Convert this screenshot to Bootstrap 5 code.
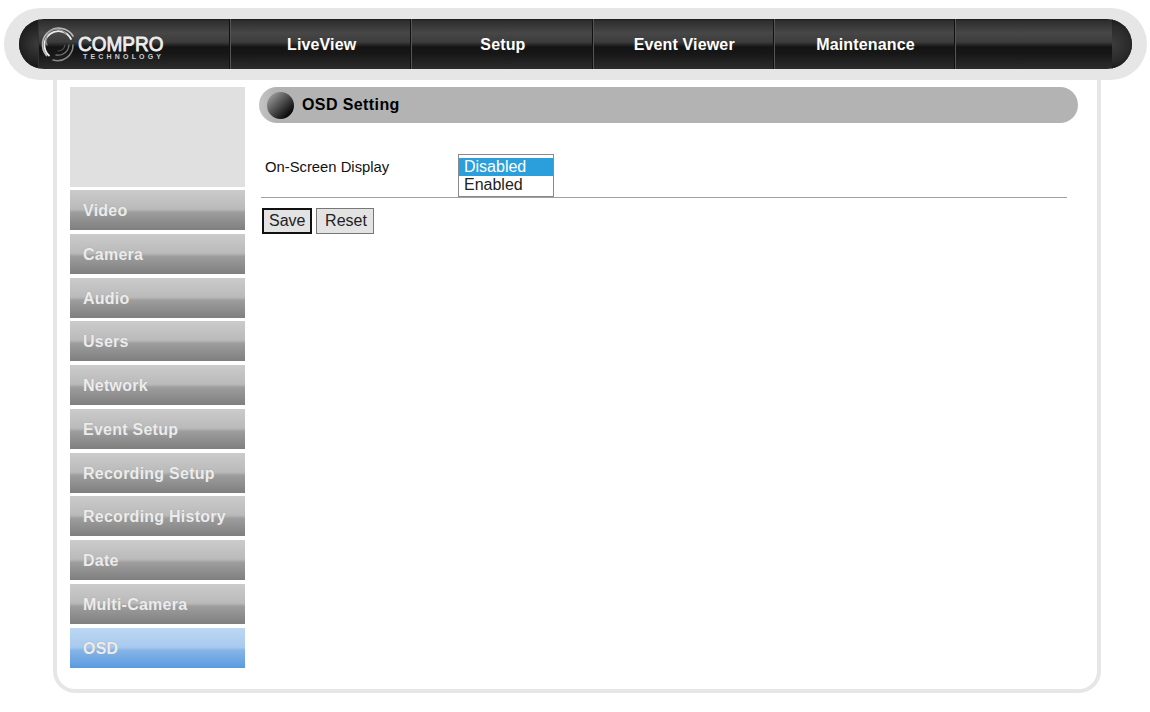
<!DOCTYPE html>
<html lang="en">
<head>
<meta charset="utf-8">
<title>OSD Setting</title>
<link href="https://cdn.jsdelivr.net/npm/bootstrap@5.3.0/dist/css/bootstrap.min.css" rel="stylesheet">
<style>
html,body{height:100%}
body{margin:0;background:#fff;font-family:"Liberation Sans",Arial,sans-serif;color:#111;overflow:hidden}
.hdr-band{margin:8px 3px 0 4px;height:72px;padding:11px 15px;background:#e6e6e6;border-radius:36px;position:relative;z-index:2}
.hdr-bar{height:50px;border-radius:25px;overflow:hidden;background:linear-gradient(#1c1c1c 0,#2e2e2e 2px,#474747 14px,#3c3c3c 23px,#141414 28px,#161616 34px,#2c2c2c 100%)}
.cap{width:20px;flex:none}
.cap-l{background:radial-gradient(circle at 100% 50%,#3c3c3c 0,#222 55%,#0c0c0c 100%);border-right:1px solid #333}
.cap-r{background:radial-gradient(circle at 0 50%,#3c3c3c 0,#2a2a2a 55%,#0c0c0c 100%)}
.logo-cell{width:191px;flex:none;padding-left:1px}
.nav-cell{flex:none;width:181.3px;padding-left:1px;border-left:1px solid #555;box-shadow:-1px 0 0 #111;color:#fff;font-weight:700;font-size:16px;letter-spacing:.15px;text-decoration:none;line-height:52px;text-align:center}
.nav-last{flex:1 1 0;width:auto}
.logo-main{font:400 19px "Liberation Sans",Arial,sans-serif;fill:#eee;stroke:#eee;stroke-width:.75px}
.logo-sub{font:700 7px "Liberation Sans",Arial,sans-serif;fill:#d0d0d0}
.frame{margin:0 49px 0 53px;height:613px;border:solid #e6e6e6;border-width:0 4px 4px 4px;border-radius:0 0 22px 22px;padding:7px 19px 0 13px}
.side{width:175px;flex:none}
.side-top{height:100px;background:#e0e0e0;margin-bottom:3px}
.side-stack{gap:3.75px}
.side-btn{height:40px;padding-left:13px;line-height:41.1px;font-weight:700;font-size:16px;letter-spacing:.25px;color:#ececec;text-decoration:none;text-shadow:0 0 1px #999;background:linear-gradient(#cbcbcb 0,#bababa 48%,#9d9d9d 56%,#7f7f7f 100%)}
.side-on{background:linear-gradient(#bdd7f3 0,#a8caee 48%,#85b4e8 56%,#5b9ade 100%)}
.main{margin-left:14px;flex:1 1 0;min-width:0}
.ttl{height:36px;border-radius:18px;background:linear-gradient(90deg,#c4c4c4 0,#b3b3b3 16px);gap:8px;padding-left:8px;font-weight:700;font-size:16px;letter-spacing:.4px;color:#000}
.ball{width:27px;height:27px;border-radius:50%;background:linear-gradient(135deg,#a0a0a0 8%,#5a5a5a 42%,#0a0a0a 82%)}
.frm-row{margin-top:31px;padding-left:6px;height:43px}
.frm-lab{width:193px;flex:none;font-size:14.8px;color:#111;position:relative;top:-8px}
.osd-list{width:96px;height:43px;border:1px solid #8a8a8e;border-radius:0;padding:3px 0 2px;font:16px/18px "Liberation Sans",Arial,sans-serif;overflow:hidden;outline:0;background:#fff;color:#222;appearance:none}
.osd-list option{padding:0 5px;height:18px;min-height:18px;line-height:18px}
.osd-list option:checked{background:linear-gradient(#2a9fdc,#2a9fdc);color:#fff}
.rule{margin:0 11px 0 2px;border:0;border-top:1px solid #a0a0a0;opacity:1}
.act{gap:4px;margin:10px 0 0 3px}
.act-btn{height:26px;font-size:16px;line-height:22px;color:#222;background:#e3e3e3;border:1px solid #777;border-radius:0}
.act-save{border:2px solid #111;width:50px;padding:0 7px 0 5px}
.act-reset{width:58px;padding:0 5px 0 7px}
</style>
</head>
<body>
<header class="hdr-band">
  <div class="hdr-bar d-flex">
    <div class="cap cap-l"></div>
    <div class="logo-cell d-flex align-items-center">
      <svg width="130" height="44" viewBox="0 0 130 44" aria-label="Compro Technology">
        <g fill="none" stroke-linecap="round">
          <path d="M6.5 33.5A16.5 16.5 0 1 1 33 14" stroke="#b9b9b9" stroke-width="1.7"/>
          <path d="M9 33.5A14 14 0 1 1 31 17" stroke="#ececec" stroke-width="1.8"/>
          <path d="M7 23A11 11 0 0 1 26 12" stroke="#8d8d8d" stroke-width="1.3"/>
          <path d="M33 23A15.5 15.5 0 0 1 13 38" stroke="#8a8a8a" stroke-width="1.5"/>
          <path d="M29 23A11 11 0 0 1 16 33" stroke="#777" stroke-width="1.3"/>
          <path d="M25 23A7 7 0 0 1 18 29" stroke="#555" stroke-width="1.1"/>
        </g>
        <text class="logo-main" transform="translate(38 28.5) scale(1 1.08)">COMPRO</text>
        <text class="logo-sub" x="43" y="37" textLength="78">TECHNOLOGY</text>
      </svg>
    </div>
    <a class="nav-cell" href="#">LiveView</a>
    <a class="nav-cell" href="#">Setup</a>
    <a class="nav-cell" href="#">Event Viewer</a>
    <a class="nav-cell" href="#">Maintenance</a>
    <div class="nav-cell nav-last"></div>
    <div class="cap cap-r"></div>
  </div>
</header>
<div class="frame d-flex">
  <aside class="side">
    <div class="side-top"></div>
    <nav class="d-flex flex-column side-stack">
      <a class="side-btn" href="#">Video</a>
      <a class="side-btn" href="#">Camera</a>
      <a class="side-btn" href="#">Audio</a>
      <a class="side-btn" href="#">Users</a>
      <a class="side-btn" href="#">Network</a>
      <a class="side-btn" href="#">Event Setup</a>
      <a class="side-btn" href="#">Recording Setup</a>
      <a class="side-btn" href="#">Recording History</a>
      <a class="side-btn" href="#">Date</a>
      <a class="side-btn" href="#">Multi-Camera</a>
      <a class="side-btn side-on" href="#">OSD</a>
    </nav>
  </aside>
  <main class="main">
    <div class="ttl d-flex align-items-center"><span class="ball"></span><span>OSD Setting</span></div>
    <form>
      <div class="frm-row d-flex align-items-center">
        <label class="frm-lab" for="osd">On-Screen Display</label>
        <select class="osd-list" id="osd" size="2">
          <option selected>Disabled</option>
          <option>Enabled</option>
        </select>
      </div>
      <hr class="rule">
      <div class="act d-flex">
        <button class="act-btn act-save" type="button">Save</button>
        <button class="act-btn act-reset" type="button">Reset</button>
      </div>
    </form>
  </main>
</div>
<script src="https://cdn.jsdelivr.net/npm/bootstrap@5.3.0/dist/js/bootstrap.bundle.min.js"></script>
</body>
</html>
